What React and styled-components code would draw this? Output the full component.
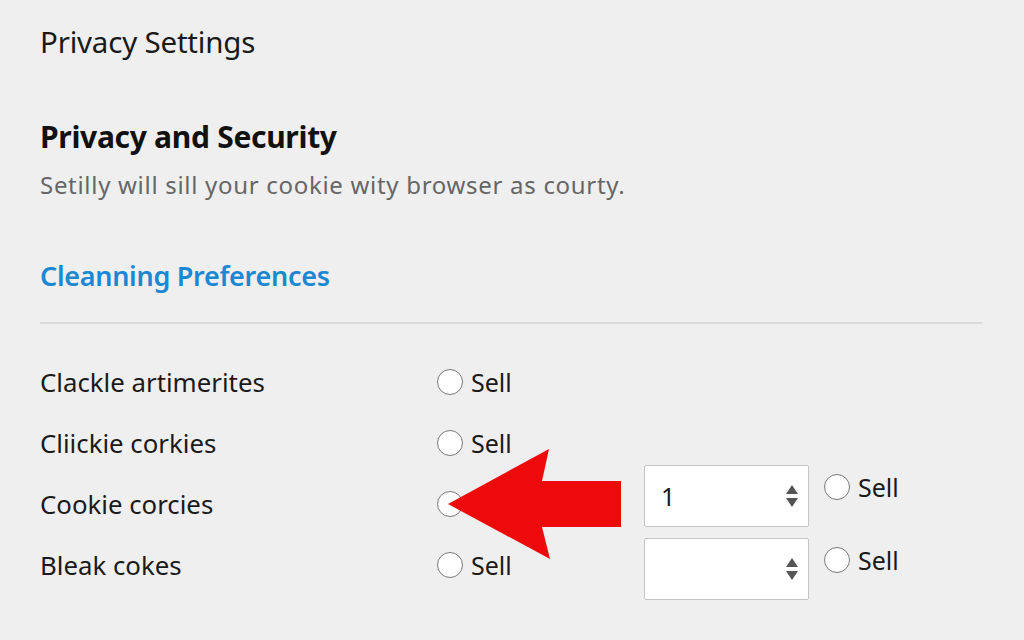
import React from 'react';
import styled, { createGlobalStyle } from 'styled-components';

const Global = createGlobalStyle`
  html, body {
    margin: 0;
    padding: 0;
    background: #efefef;
  }
  body {
    font-family: "Noto Sans", "Open Sans", sans-serif;
    color: #1a1a1a;
  }
`;

const Page = styled.div`
  position: relative;
  width: 1024px;
  height: 640px;
  padding: 22px 42px 0 40px;
  box-sizing: border-box;
  overflow: hidden;
`;

const Title = styled.h1`
  margin: 0;
  font-size: 29.5px;
  font-weight: 400;
  line-height: 40px;
  letter-spacing: -0.2px;
`;

const Heading = styled.h2`
  margin: 53px 0 0;
  font-size: 30px;
  font-weight: 700;
  line-height: 44px;
  letter-spacing: -0.3px;
  color: #111;
`;

const Subtitle = styled.p`
  margin: 10px 0 0;
  font-size: 24px;
  line-height: 32px;
  letter-spacing: 0.7px;
  color: #666;
`;

const SectionTitle = styled.h3`
  margin: 57px 0 0;
  font-size: 27px;
  font-weight: 600;
  line-height: 36px;
  letter-spacing: -0.3px;
  color: #1c88d2;
`;

const Divider = styled.hr`
  margin: 28px 0 0;
  border: 0;
  height: 2px;
  background: #dadada;
`;

const Grid = styled.div`
  display: grid;
  grid-template-columns: 397px 207px 1fr;
  grid-template-rows: repeat(4, 61px);
  margin-top: 27px;
`;

const Label = styled.div`
  grid-column: 1;
  display: flex;
  align-items: center;
  font-size: 25.8px;
  color: #1a1a1a;
`;

const Choice = styled.label`
  grid-column: 2;
  display: flex;
  align-items: center;
  gap: 8px;
  font-size: 25px;
  color: #1a1a1a;
`;

const Circle = styled.span`
  width: 24px;
  height: 24px;
  border-radius: 50%;
  border: 1.5px solid #7a7a7a;
  background: #fff;
  flex-shrink: 0;
`;

const Side = styled.div`
  grid-column: 3;
  grid-row: 3 / span 2;
  display: flex;
  flex-direction: column;
  gap: 11px;
  margin-top: -8px;
`;

const SideRow = styled.div`
  display: flex;
  align-items: flex-start;
  gap: 15px;
`;

const SpinBox = styled.div`
  width: 165px;
  height: 62px;
  box-sizing: border-box;
  border: 1.5px solid #c4c4c4;
  border-radius: 2px;
  background: #fff;
  display: flex;
  align-items: center;
  justify-content: space-between;
  padding: 0 9px 0 16px;
  font-size: 25px;
  color: #1a1a1a;
`;

const SideChoice = styled(Choice)`
  height: 26px;
  margin-top: 9px;
`;

const Arrow = styled.svg`
  position: absolute;
  left: 0;
  top: 0;
  pointer-events: none;
`;

function Spinner() {
  return (
    <svg width="14" height="26" viewBox="0 0 14 26">
      <polygon points="7,2 13,11 1,11" fill="#555" />
      <polygon points="1,15 13,15 7,24" fill="#555" />
    </svg>
  );
}

function Radio({ text, as }) {
  const C = as || Choice;
  return (
    <C>
      <Circle />
      {text}
    </C>
  );
}

export default function App() {
  const rows = ['Clackle artimerites', 'Cliickie corkies', 'Cookie corcies', 'Bleak cokes'];
  return (
    <Page>
      <Global />
      <Title>Privacy Settings</Title>
      <Heading>Privacy and Security</Heading>
      <Subtitle>Setilly will sill your cookie wity browser as courty.</Subtitle>
      <SectionTitle>Cleanning Preferences</SectionTitle>
      <Divider />
      <Grid>
        {rows.map((r, i) => (
          <React.Fragment key={r}>
            <Label style={{ gridRow: i + 1 }}>{r}</Label>
            <Choice style={{ gridRow: i + 1 }}>
              <Circle />
              {i === 2 ? '' : 'Sell'}
            </Choice>
          </React.Fragment>
        ))}
        <Side>
          <SideRow>
            <SpinBox>
              <span>1</span>
              <Spinner />
            </SpinBox>
            <Radio text="Sell" as={SideChoice} />
          </SideRow>
          <SideRow>
            <SpinBox>
              <span />
              <Spinner />
            </SpinBox>
            <Radio text="Sell" as={SideChoice} />
          </SideRow>
        </Side>
      </Grid>
      <Arrow width="1024" height="640" viewBox="0 0 1024 640">
        <polygon
          points="448,504 549,449 542,481 621,481 621,527 542,527 550,559"
          fill="#ee0a0a"
        />
      </Arrow>
    </Page>
  );
}
